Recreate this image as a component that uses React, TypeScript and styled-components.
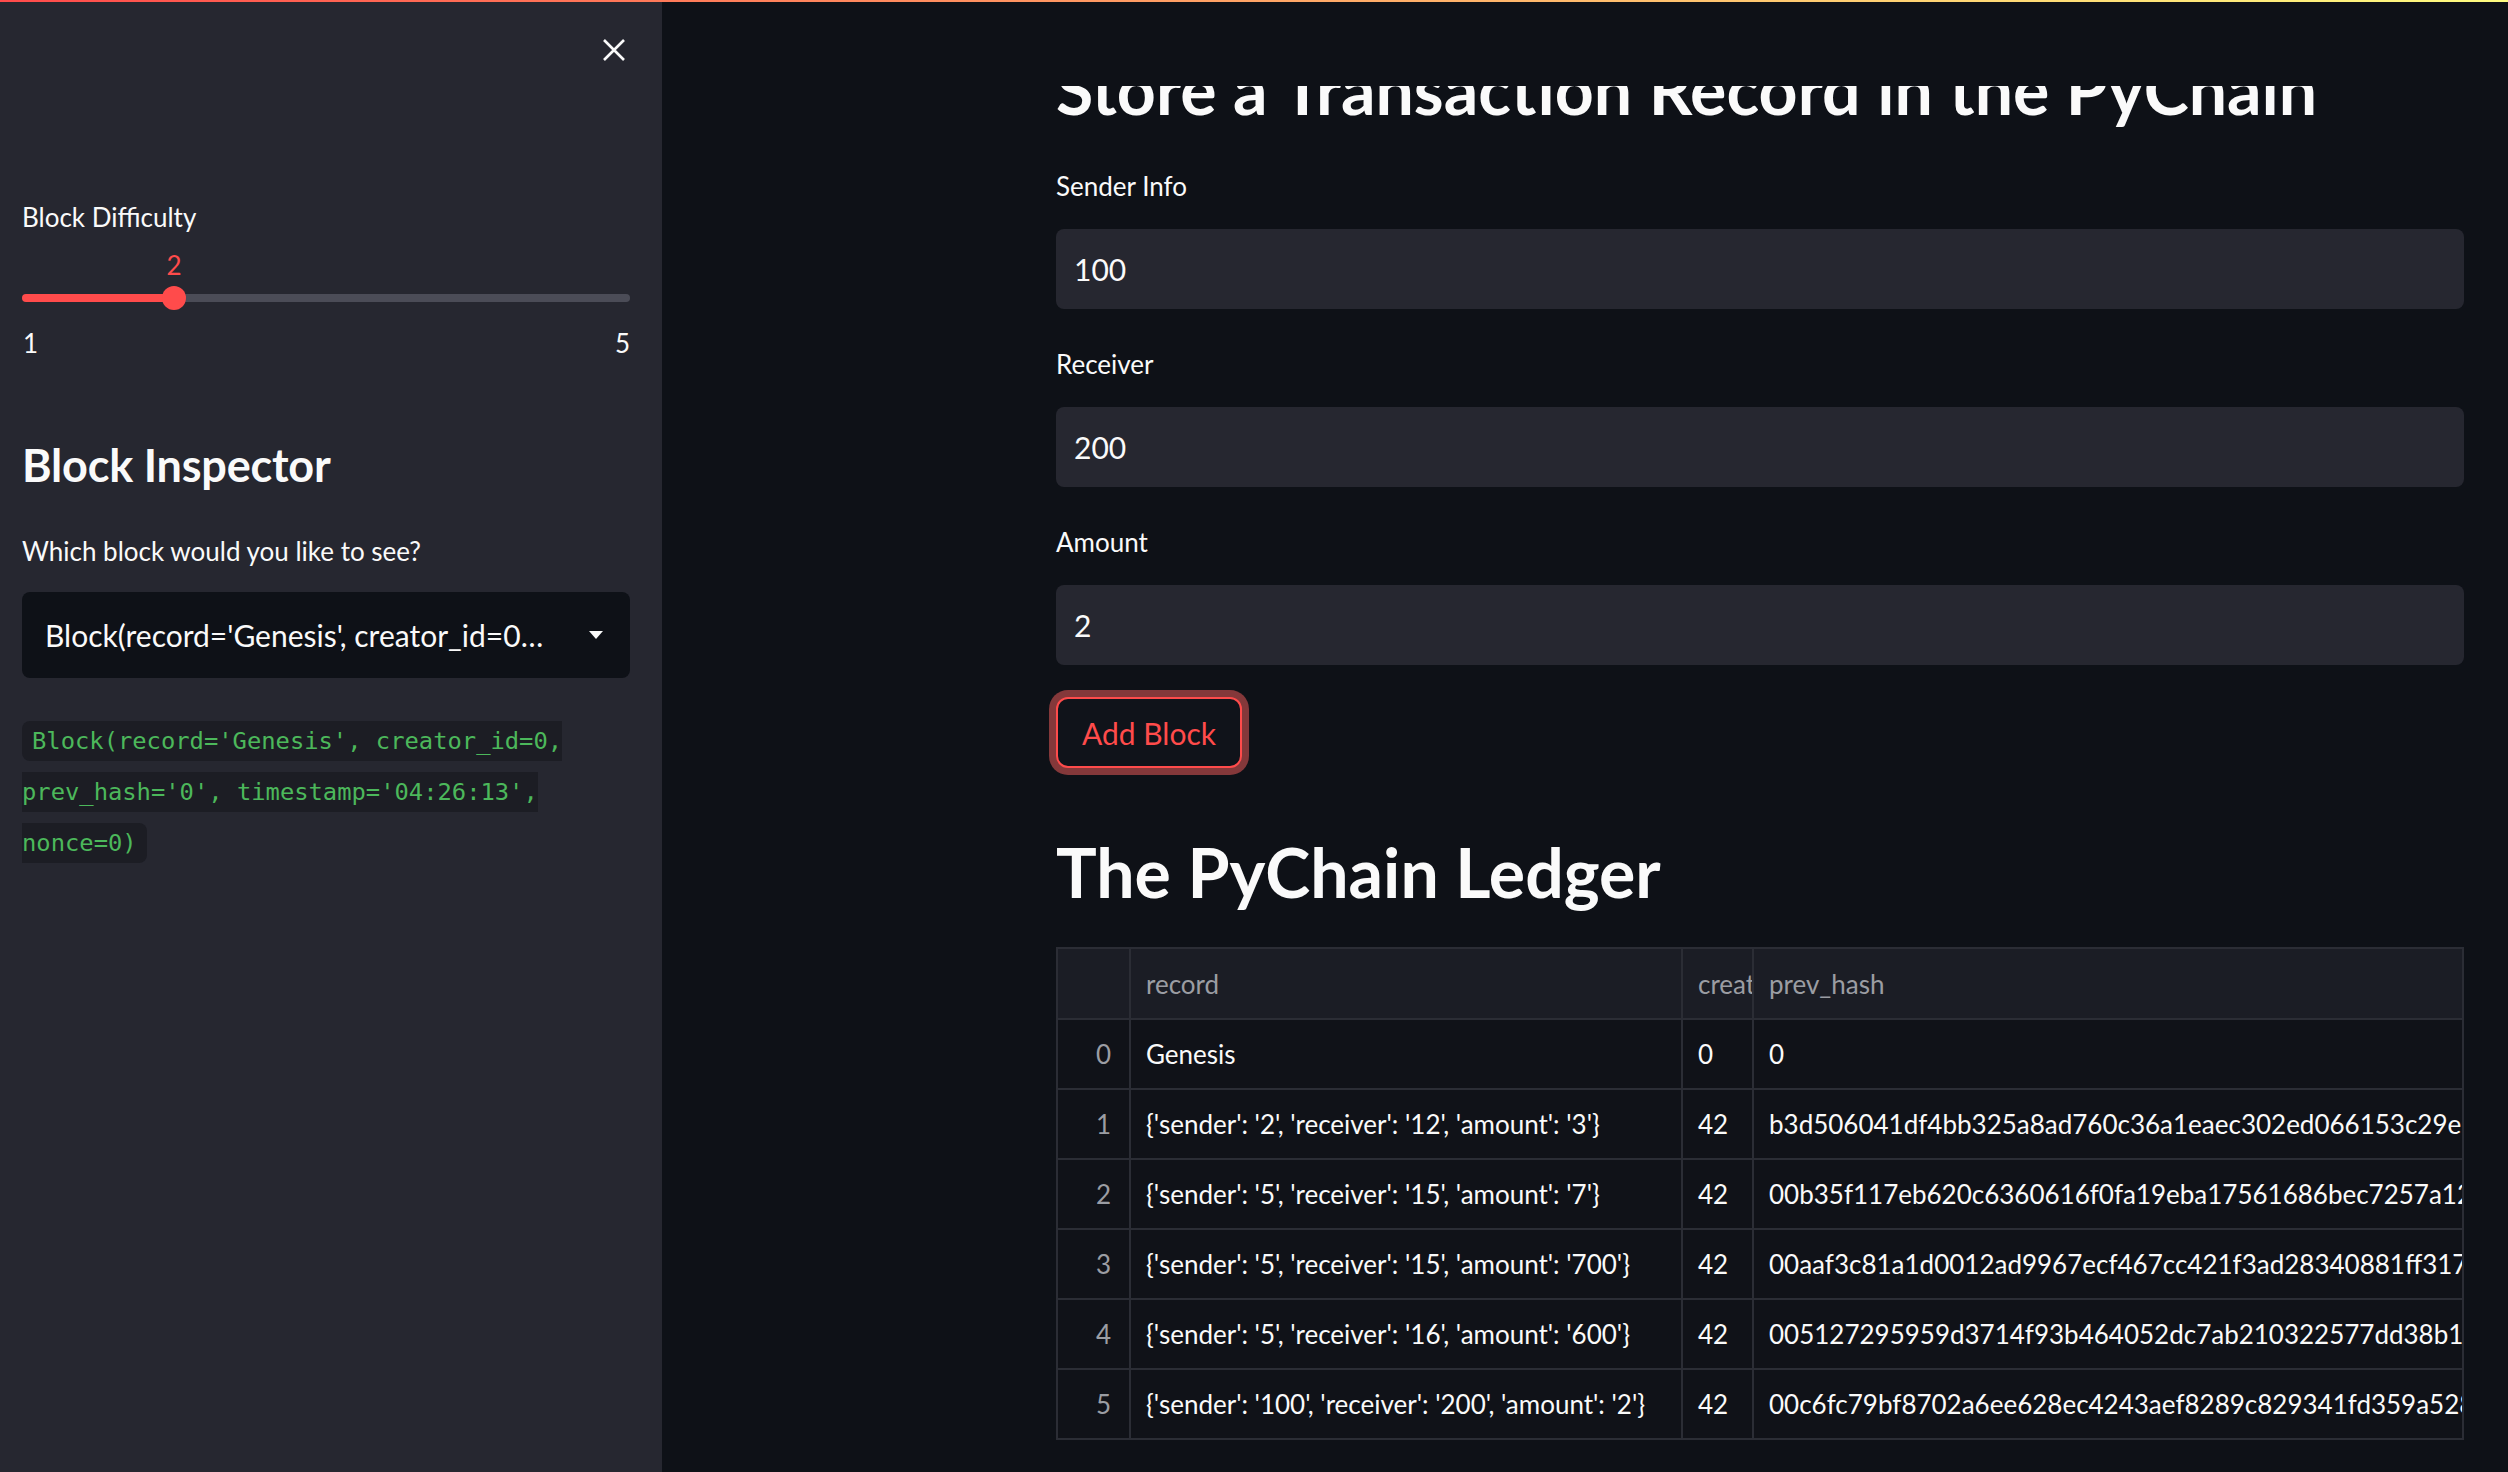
import React from "react";
import styled, { createGlobalStyle } from "styled-components";

const GlobalStyle = createGlobalStyle`
  html, body { margin: 0; padding: 0; background: #0e1117; }
  body { font-family: Lato, "Liberation Sans", sans-serif; color: #fafafa; }
  * { box-sizing: border-box; }
`;

const Page = styled.div`
  position: relative;
  width: 2508px;
  height: 1472px;
  overflow: hidden;
  display: flex;
  background: #0e1117;
`;

const Decoration = styled.div`
  position: absolute;
  top: 0;
  left: 0;
  right: 0;
  height: 2px;
  background: linear-gradient(90deg, #ff4b4b, #fffd80);
  z-index: 10;
`;

/* ---------- Sidebar ---------- */
const Sidebar = styled.aside`
  flex: 0 0 662px;
  width: 662px;
  min-width: 0;
  height: 100%;
  overflow: hidden;
  background: #262730;
  padding: 0 32px 0 22px;
  display: flex;
  flex-direction: column;
`;

const CloseRow = styled.div`
  height: 100px;
  display: flex;
  align-items: center;
  justify-content: flex-end;
  padding-right: 4px;
`;

const CloseButton = styled.button`
  background: none;
  border: none;
  padding: 0;
  display: flex;
  cursor: pointer;
`;

const WidgetLabel = styled.div<{ $mt: number }>`
  margin-top: ${(p) => p.$mt}px;
  font-size: 26px;
  line-height: 31px;
  color: #fafafa;
`;

const SliderBlock = styled.div`
  margin-top: 17px;
  display: flex;
  flex-direction: column;
`;

const ValueRow = styled.div`
  position: relative;
  height: 31px;
`;

const ValueBubble = styled.span<{ $pct: number }>`
  position: absolute;
  left: ${(p) => p.$pct}%;
  top: 0;
  transform: translateX(-50%);
  font-size: 26px;
  line-height: 31px;
  color: #ff4b4b;
`;

const TrackArea = styled.div`
  position: relative;
  height: 24px;
  margin-top: 5px;
  display: flex;
  align-items: center;
`;

const Rail = styled.div<{ $pct: number }>`
  flex: 1;
  height: 8px;
  border-radius: 4px;
  background: linear-gradient(
    to right,
    #ff4b4b 0,
    #ff4b4b ${(p) => p.$pct}%,
    #4b4c57 ${(p) => p.$pct}%,
    #4b4c57 100%
  );
`;

const Thumb = styled.div<{ $pct: number }>`
  position: absolute;
  top: 0;
  left: calc(${(p) => p.$pct}% - 12px);
  width: 24px;
  height: 24px;
  border-radius: 50%;
  background: #ff4b4b;
`;

const TickRow = styled.div`
  margin-top: 18px;
  display: flex;
  justify-content: space-between;
  font-size: 26px;
  line-height: 31px;
  color: #fafafa;
  padding-left: 1px;
`;

const SidebarHeading = styled.h2`
  margin: 79px 0 0;
  font-size: 45px;
  line-height: 54px;
  font-weight: 700;
  color: #fafafa;
  letter-spacing: -0.2px;
`;

const SelectBox = styled.div`
  margin-top: 25px;
  height: 86px;
  background: #0e1117;
  border-radius: 8px;
  display: flex;
  align-items: center;
  padding: 0 27px 0 23px;
`;

const SelectValue = styled.div`
  flex: 1;
  min-width: 0;
  margin-right: 43px;
  font-size: 30px;
  white-space: nowrap;
  overflow: hidden;
  text-overflow: ellipsis;
  color: #fafafa;
`;

const CodePara = styled.p`
  margin: 34px 0 0;
  font-size: 30px;
  line-height: 51px;
`;

const InlineCode = styled.code`
  font-family: "DejaVu Sans Mono", "Liberation Mono", monospace;
  font-size: 23.8px;
  line-height: 1;
  color: #4cb85b;
  background: #1c1d24;
  padding: 6px 10px;
  border-radius: 8px;
`;

/* ---------- Main ---------- */
const Main = styled.main`
  position: relative;
  flex: 1;
  min-width: 0;
  height: 100%;
  overflow: hidden;
`;

const HeaderBar = styled.div`
  position: absolute;
  top: 0;
  left: 0;
  right: 0;
  height: 86px;
  background: #0e1117;
  z-index: 5;
`;

const Content = styled.div`
  margin-left: 394px;
  width: 1408px;
  padding-top: 49px;
  display: flex;
  flex-direction: column;
`;

const Heading = styled.h2<{ $mt: number }>`
  margin: ${(p) => p.$mt}px 0 0;
  font-size: 68px;
  line-height: 80px;
  font-weight: 700;
  color: #fafafa;
  white-space: nowrap;
`;

const FieldLabel = styled.label<{ $mt: number }>`
  display: block;
  margin-top: ${(p) => p.$mt}px;
  font-size: 26px;
  line-height: 31px;
  color: #fafafa;
`;

const TextInput = styled.input`
  margin-top: 27px;
  height: 80px;
  width: 100%;
  border: none;
  outline: none;
  background: #262730;
  border-radius: 8px;
  padding: 0 18px;
  font-family: Lato, "Liberation Sans", sans-serif;
  font-size: 30px;
  color: #fafafa;
`;

const AddButton = styled.button`
  margin-top: 32px;
  align-self: flex-start;
  height: 71px;
  padding: 0 24px;
  border: 2px solid #ff4b4b;
  border-radius: 12px;
  background: #10131a;
  color: #ff4b4b;
  font-family: Lato, "Liberation Sans", sans-serif;
  font-size: 30px;
  box-shadow: 0 0 0 7px #84383a;
  cursor: pointer;
`;

const Table = styled.table`
  margin-top: 35px;
  width: 1408px;
  border-collapse: collapse;
  table-layout: fixed;
  font-size: 26px;
  border: 2px solid #2b2d35;
`;

const HeadCell = styled.th<{ $index?: boolean }>`
  height: 71px;
  background: #1b1d25;
  color: #9b9da3;
  font-weight: 400;
  text-align: ${(p) => (p.$index ? "right" : "left")};
  padding: 0 16px 0 ${(p) => (p.$index ? 0 : 15)}px;
  border: 2px solid #2b2d35;
  white-space: nowrap;
  overflow: hidden;
  text-overflow: clip;
`;

const Cell = styled.td<{ $index?: boolean }>`
  height: 70px;
  background: #101218;
  color: ${(p) => (p.$index ? "#9b9da3" : "#fafafa")};
  text-align: ${(p) => (p.$index ? "right" : "left")};
  padding: 0 ${(p) => (p.$index ? 18 : 16)}px 0 ${(p) => (p.$index ? 0 : 15)}px;
  border: 2px solid #2b2d35;
  white-space: nowrap;
  overflow: hidden;
  text-overflow: clip;
`;

const rows = [
  { record: "Genesis", creator: "0", hash: "0" },
  {
    record: "{'sender': '2', 'receiver': '12', 'amount': '3'}",
    creator: "42",
    hash: "b3d506041df4bb325a8ad760c36a1eaec302ed066153c29e12a4f0c9d1b7e3a5",
  },
  {
    record: "{'sender': '5', 'receiver': '15', 'amount': '7'}",
    creator: "42",
    hash: "00b35f117eb620c6360616f0fa19eba17561686bec7257a12b1c8e0f3d6a2b94",
  },
  {
    record: "{'sender': '5', 'receiver': '15', 'amount': '700'}",
    creator: "42",
    hash: "00aaf3c81a1d0012ad9967ecf467cc421f3ad28340881ff31727be5c0d9e4a12",
  },
  {
    record: "{'sender': '5', 'receiver': '16', 'amount': '600'}",
    creator: "42",
    hash: "005127295959d3714f93b464052dc7ab210322577dd38b1d36f2e8a1c4b07d55",
  },
  {
    record: "{'sender': '100', 'receiver': '200', 'amount': '2'}",
    creator: "42",
    hash: "00c6fc79bf8702a6ee628ec4243aef8289c829341fd359a52868d1e7f0b3c9a6",
  },
];

const sliderPct = 25;

export default function App() {
  return (
    <>
      <GlobalStyle />
      <Page>
        <Decoration />
        <Sidebar>
          <CloseRow>
            <CloseButton aria-label="Close sidebar">
              <svg width="24" height="24" viewBox="0 0 24 24">
                <path
                  d="M2 2 L22 22 M22 2 L2 22"
                  stroke="#fafafa"
                  strokeWidth="2.6"
                  fill="none"
                />
              </svg>
            </CloseButton>
          </CloseRow>
          <WidgetLabel $mt={102}>Block Difficulty</WidgetLabel>
          <SliderBlock>
            <ValueRow>
              <ValueBubble $pct={sliderPct}>2</ValueBubble>
            </ValueRow>
            <TrackArea>
              <Rail $pct={sliderPct} />
              <Thumb $pct={sliderPct} />
            </TrackArea>
            <TickRow>
              <span>1</span>
              <span>5</span>
            </TickRow>
          </SliderBlock>
          <SidebarHeading>Block Inspector</SidebarHeading>
          <WidgetLabel $mt={44}>Which block would you like to see?</WidgetLabel>
          <SelectBox>
            <SelectValue>
              Block(record='Genesis', creator_id=0, prev_hash='0', timestamp='04:26:13', nonce=0)
            </SelectValue>
            <svg width="14" height="8" viewBox="0 0 14 8">
              <path d="M0 0 H14 L7 8 Z" fill="#fafafa" />
            </svg>
          </SelectBox>
          <CodePara>
            <InlineCode>
              Block(record='Genesis', creator_id=0, prev_hash='0', timestamp='04:26:13', nonce=0)
            </InlineCode>
          </CodePara>
        </Sidebar>
        <Main>
          <HeaderBar />
          <Content>
            <Heading $mt={0}>Store a Transaction Record in the PyChain</Heading>
            <FieldLabel $mt={42}>Sender Info</FieldLabel>
            <TextInput readOnly value="100" />
            <FieldLabel $mt={40}>Receiver</FieldLabel>
            <TextInput readOnly value="200" />
            <FieldLabel $mt={40}>Amount</FieldLabel>
            <TextInput readOnly value="2" />
            <AddButton>Add Block</AddButton>
            <Heading $mt={64}>The PyChain Ledger</Heading>
            <Table>
              <colgroup>
                <col style={{ width: 73 }} />
                <col style={{ width: 552 }} />
                <col style={{ width: 71 }} />
                <col />
              </colgroup>
              <thead>
                <tr>
                  <HeadCell $index />
                  <HeadCell>record</HeadCell>
                  <HeadCell>creator_id</HeadCell>
                  <HeadCell>prev_hash</HeadCell>
                </tr>
              </thead>
              <tbody>
                {rows.map((r, i) => (
                  <tr key={i}>
                    <Cell $index>{i}</Cell>
                    <Cell>{r.record}</Cell>
                    <Cell>{r.creator}</Cell>
                    <Cell>{r.hash}</Cell>
                  </tr>
                ))}
              </tbody>
            </Table>
          </Content>
        </Main>
      </Page>
    </>
  );
}
